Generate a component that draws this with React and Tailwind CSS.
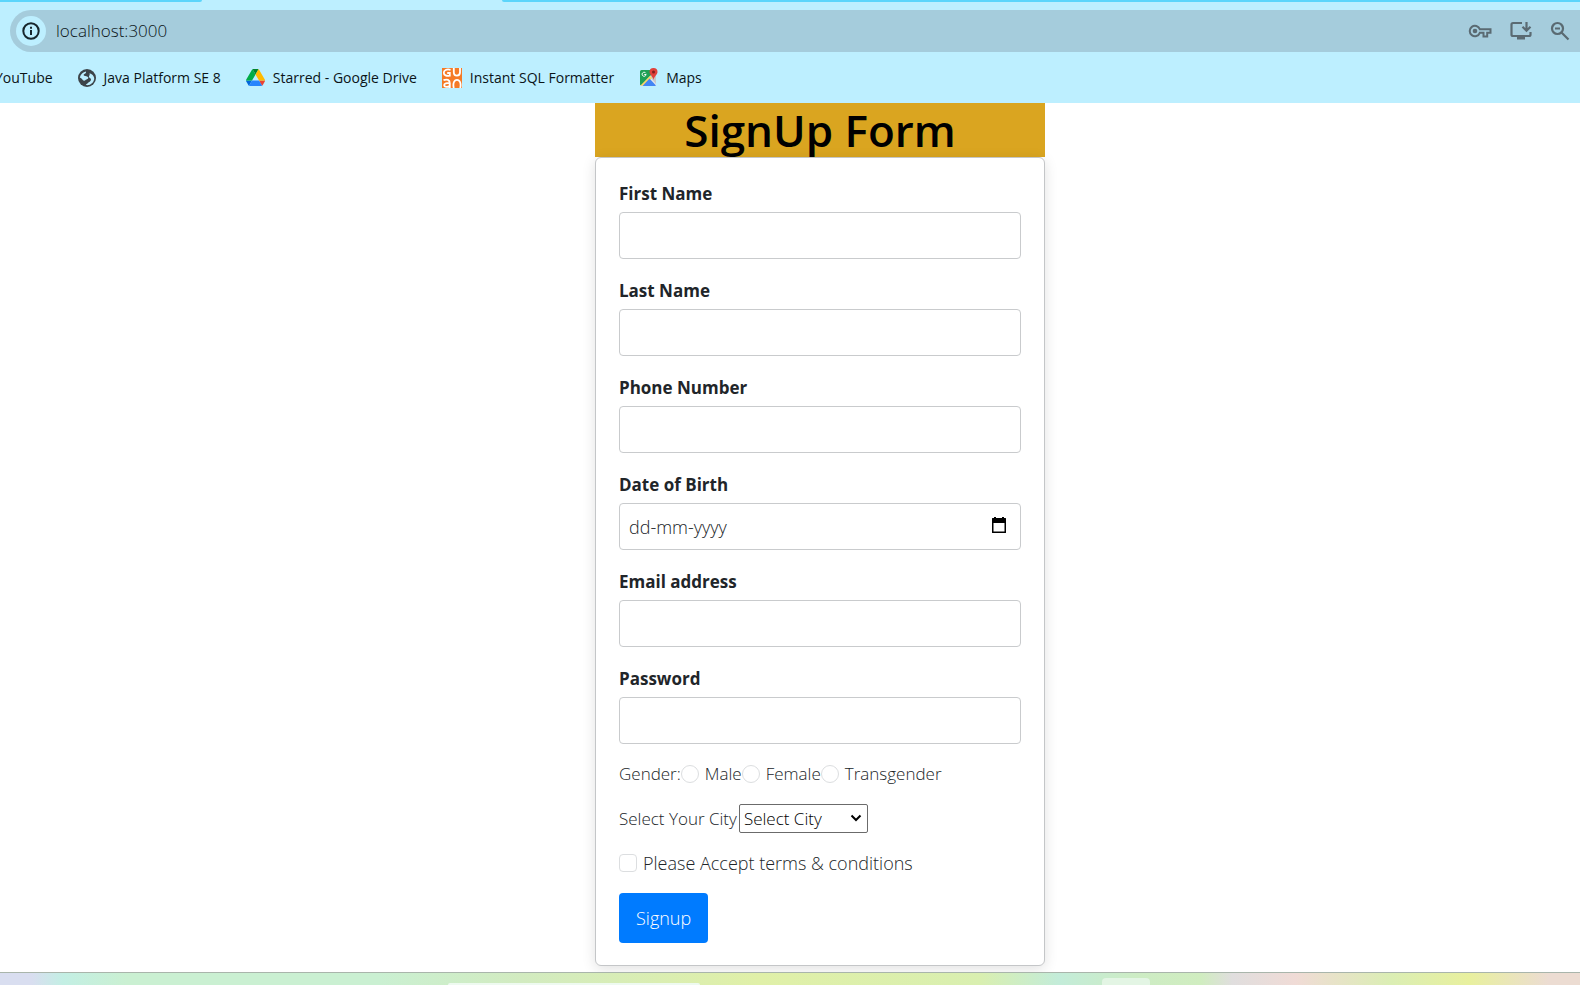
import React from "react";

const bookmarks = [
  { label: "YouTube", icon: null },
  { label: "Java Platform SE 8", icon: GlobeIcon },
  { label: "Starred - Google Drive", icon: DriveIcon },
  { label: "Instant SQL Formatter", icon: GuduIcon },
  { label: "Maps", icon: MapsIcon },
];

const fields = [
  { id: "firstName", label: "First Name", type: "text" },
  { id: "lastName", label: "Last Name", type: "text" },
  { id: "phone", label: "Phone Number", type: "tel" },
  { id: "dob", label: "Date of Birth", type: "text", placeholder: "dd-mm-yyyy" },
  { id: "email", label: "Email address", type: "email" },
  { id: "password", label: "Password", type: "password" },
];

function GlobeIcon() {
  return (
    <svg viewBox="0 0 18 18" className="size-[18px]" aria-hidden="true">
      <circle cx="9" cy="9" r="9" fill="#3c4449" />
      <path d="M1.800 8.500C2.500 5.500 5 3 8 2.600c.3 1.200-.3 1.900-1.600 2.300-1 .4-1 1.300-.2 1.800 1.200.6 3.500.3 4 1.600.4 1.200-.6 1.800-1.700 2.200-1.300.4-1.300 1.500-2.500 1.200C4.500 11.300 4 9.200 1.800 8.500z" fill="#bdefff" />
      <path d="M11.500 4.200c2.500.8 4.400 2.500 4.700 4.800.2 3.200-2.200 6.300-5.500 7-1.200.3-2.500.1-2.900-.5 1.400-.5 2-1.400 3-2.200 1.300-1 2.300-1.600 2.200-2.900-.1-1.200-1.600-1.400-2-2.400-.4-1.100 1.300-1.700.5-3.800z" fill="#bdefff" />
    </svg>
  );
}

function DriveIcon() {
  return (
    <svg viewBox="0 0 87 78" className="h-[17px] w-[19px]" aria-hidden="true">
      <path d="M6.600 66.850l3.850 6.650c.8 1.400 1.950 2.500 3.300 3.300l13.750-23.800H0c0 1.550.4 3.100 1.200 4.500z" fill="#0066da" />
      <path d="M43.650 25L29.900 1.200c-1.350.8-2.500 1.900-3.300 3.300L1.200 48.500A9.060 9.060 0 0 0 0 53h27.500z" fill="#00ac47" />
      <path d="M73.550 76.800c1.350-.8 2.500-1.900 3.300-3.300l1.600-2.750 7.650-13.250c.8-1.400 1.200-2.950 1.200-4.500H59.800l5.850 11.500z" fill="#ea4335" />
      <path d="M43.650 25L57.400 1.200C56.050.4 54.500 0 52.900 0H34.400c-1.600 0-3.150.45-4.500 1.200z" fill="#00832d" />
      <path d="M59.800 53H27.500L13.750 76.800c1.350.8 2.900 1.200 4.500 1.200h50.800c1.600 0 3.150-.45 4.500-1.200z" fill="#2684fc" />
      <path d="M73.400 26.500L60.700 4.500c-.8-1.400-1.950-2.500-3.300-3.300L43.650 25 59.800 53h27.450c0-1.550-.4-3.100-1.200-4.500z" fill="#ffba00" />
    </svg>
  );
}

function GuduIcon() {
  return (
    <svg viewBox="0 0 20 20" className="size-5" aria-hidden="true">
      <rect width="20" height="20" fill="#f57a26" />
      <g fill="none" stroke="#fff" strokeWidth="1.800">
        <path d="M8.500 1.800C4.500.6 1.800 2.400 1.800 4.800s2.600 3.600 6 2.900V5H5.200" />
        <path d="M11.800 0v4.300c0 2 1 3.300 3.100 3.300S18 6.400 18 4.300V0" />
        <path d="M1.500 12.200c3.500-1.300 6.300-.4 6.300 3V20M7.800 15.500c-3-.8-5.600-.2-5.600 1.600 0 2.300 4.200 2.300 5.600.3" />
        <path d="M11.800 20c-1.200-4.500.3-8.200 3.200-8.200s4.400 3.700 3.200 8.200" />
      </g>
    </svg>
  );
}

function MapsIcon() {
  return (
    <svg viewBox="0 0 19 19" className="size-[19px]" aria-hidden="true">
      <rect x="1" y="2" width="16" height="16" rx="1.500" fill="#e8eaed" />
      <path d="M2.500 2H13v4L2 17.500c-.6-.2-1-.5-1-1V3.500A1.500 1.500 0 0 1 2.500 2z" fill="#1fa055" />
      <path d="M11 9l6-5v12z" fill="#c5c9cc" />
      <path d="M1.500 17.500L11 8l2 2-8 8z" fill="#fdd663" />
      <path d="M10.500 10.500l6.500 7c-.3.300-.7.500-1 .500H3.500z" fill="#4285f4" />
      <path d="M6.800 5.200a2 2 0 1 0 .3 1.300H5.300" fill="none" stroke="#fff" />
      <path d="M14.500 0a4 4 0 0 0-4 4c0 2.700 3.300 4 4 8 .7-4 4-5.300 4-8a4 4 0 0 0-4-4z" fill="#e0403a" />
      <circle cx="14.500" cy="4" r="1.500" fill="#7e1f1c" />
    </svg>
  );
}

function InfoIcon() {
  return (
    <svg viewBox="0 0 18 18" className="size-[18px]" fill="none" stroke="#17262d" strokeWidth="2" aria-hidden="true">
      <circle cx="9" cy="9" r="7.700" />
      <path d="M9 8v5M9 4.800v2" />
    </svg>
  );
}

function KeyIcon() {
  return (
    <svg viewBox="0 0 24 14" className="h-[14px] w-6" fill="none" stroke="#5a6a72" strokeWidth="2" aria-hidden="true">
      <path d="M11.800 5.200A5.200 5.200 0 1 0 11.800 8.800H15.500v3.700h3.700V8.800H22.500V5.200z" />
      <circle cx="7" cy="7" r="2.300" fill="#5a6a72" stroke="none" />
    </svg>
  );
}

function InstallIcon() {
  return (
    <svg viewBox="0 0 22 20" className="h-5 w-[22px]" fill="none" stroke="#5a6a72" strokeWidth="2.200" aria-hidden="true">
      <path d="M12 2H3Q1.500 2 1.500 3.500v10Q1.500 15 3 15h16q1.500 0 1.500-1.500V11M16.500 1v8M12.500 5.800l4 4 4-4" />
      <path d="M7 17h8" strokeWidth="3" />
    </svg>
  );
}

function ZoomOutIcon() {
  return (
    <svg viewBox="0 0 20 20" className="size-5" fill="none" stroke="#5a6a72" strokeWidth="2.200" aria-hidden="true">
      <circle cx="7.500" cy="7.500" r="5.500" />
      <path d="M11.500 11.500l7 7M5 7.500h5" />
    </svg>
  );
}

function CalendarIcon() {
  return (
    <svg viewBox="0 0 16 16" className="size-4" aria-hidden="true">
      <path d="M3 0h2v1h6V0h2v1h1.500q.5 0 .5.500v14q0 .5-.5.500h-13q-.5 0-.5-.500v-14q0-.5.500-.500H3zM2.500 6v8.500h11V6z" fill="#000" fillRule="evenodd" />
    </svg>
  );
}

function BrowserBar() {
  return (
    <header className="bg-[#bdefff]">
      <div className="flex h-[2px] justify-between" aria-hidden="true">
        <div className="w-[202px] rounded-br-full bg-[#5bd5fb]" />
        <div className="w-[1078px] rounded-bl-full bg-[#5bd5fb]" />
      </div>
      <div className="pt-2 pl-[10px]">
        <div className="flex h-[42px] items-center rounded-l-full bg-[#a5ccdc] pr-[10px] pl-[6px]">
          <button type="button" aria-label="Site information" className="flex size-[30px] items-center justify-center rounded-full bg-[#bdefff]">
            <InfoIcon />
          </button>
          <input
            aria-label="Address"
            defaultValue="localhost:3000"
            className="ml-[10px] flex-1 bg-transparent text-[17px] font-light text-[#0b1418] outline-none"
          />
          <div className="flex items-center gap-[18px]">
            <button type="button" aria-label="Passwords"><KeyIcon /></button>
            <button type="button" aria-label="Install app"><InstallIcon /></button>
            <button type="button" aria-label="Zoom out"><ZoomOutIcon /></button>
          </div>
        </div>
      </div>
      <nav className="-ml-[5px] flex h-[51px] items-center gap-[25px] text-sm text-[#0b1418]">
        {bookmarks.map(({ label, icon: Icon }) => (
          <a key={label} href="#" className="flex items-center gap-2 whitespace-nowrap">
            {Icon && <Icon />}
            {label}
          </a>
        ))}
      </nav>
    </header>
  );
}

function Field({ id, label, type, placeholder }) {
  return (
    <div className="flex flex-col gap-1">
      <label htmlFor={id} className="text-[17px] leading-7 font-bold">{label}</label>
      <div className="relative">
        <input
          id={id}
          type={type}
          placeholder={placeholder}
          className="h-[47px] w-full rounded border border-[#c9cbcd] bg-white px-[9px] text-lg font-light outline-none placeholder:text-[#212529]"
        />
        {id === "dob" && (
          <button type="button" aria-label="Open calendar" className="absolute top-[14px] right-[14px]">
            <CalendarIcon />
          </button>
        )}
      </div>
    </div>
  );
}

function SignUpForm() {
  return (
    <form className="rounded-md border border-[#c4c6c8] bg-white px-[23px] pt-[22px] pb-[22px] shadow-[0_3px_14px_rgba(0,0,0,0.12)]">
      <div className="mb-4 flex flex-col gap-[18px]">
        {fields.map((field) => (
          <Field key={field.id} {...field} />
        ))}
      </div>
      <fieldset aria-label="Gender" className="flex h-7 items-center text-[17px] font-light">
        <span>Gender:</span>
        {["Male", "Female", "Transgender"].map((gender) => (
          <label key={gender} className="flex items-center gap-[6px]">
            <input type="radio" name="gender" className="size-[18px] appearance-none rounded-full border border-[#dcdee0] bg-white" />
            {gender}
          </label>
        ))}
      </fieldset>
      <div className="mt-4 flex h-[29px] items-center gap-[2px] text-[17px] font-light">
        <label htmlFor="city">Select Your City</label>
        <div className="relative">
          <select id="city" className="h-[29px] w-[129px] appearance-none rounded-[2px] border border-[#6b6b6b] bg-white pl-1 text-black">
            <option>Select City</option>
          </select>
          <svg viewBox="0 0 12 8" className="pointer-events-none absolute top-[10px] right-[6px] h-2 w-3" fill="none" stroke="#000" strokeWidth="2" aria-hidden="true">
            <path d="M1.500 1.500L6 6l4.500-4.500" />
          </svg>
        </div>
      </div>
      <label className="mt-4 flex h-7 items-center gap-[6px] text-lg font-light">
        <input type="checkbox" className="size-[18px] appearance-none rounded border border-[#dcdee0] bg-white" />
        Please Accept terms &amp; conditions
      </label>
      <button type="submit" className="mt-4 h-[50px] rounded bg-[#007bff] px-[17px] text-lg font-light text-white">
        Signup
      </button>
    </form>
  );
}

export default function App() {
  return (
    <div className="flex min-h-screen flex-col overflow-x-hidden bg-white font-['Open_Sans','Noto_Sans',sans-serif] text-[#212529]">
      <BrowserBar />
      <main className="flex justify-center pb-[6px] pl-[60px]">
        <div className="w-full max-w-[450px]">
          <h1 className="bg-[#daa520] text-center text-[44px] leading-[54px] font-semibold text-black">SignUp Form</h1>
          <SignUpForm />
        </div>
      </main>
      <footer className="mt-auto flex h-[13px] items-end overflow-hidden border-t border-[#a9b5ab] bg-[linear-gradient(90deg,#d9def0_0%,#d9def0_2%,#c3efe4_4%,#caf0d2_8%,#caf0d2_24%,#d2ebc0_33%,#e0f0a8_48%,#d9efb0_62%,#c3ecd9_67%,#cdecc4_72%,#d0edc0_76%,#e0dede_78%,#f0dbd6_82%,#dbeeb4_88%,#e8f09e_93%,#ecdcd2_98%)]">
        <div className="ml-[448px] h-[2px] w-[252px] rounded-t-full bg-[#eefaf0]" />
        <div className="ml-[402px] h-[7px] w-12 rounded-t bg-[#e3f5e4]" />
      </footer>
    </div>
  );
}
